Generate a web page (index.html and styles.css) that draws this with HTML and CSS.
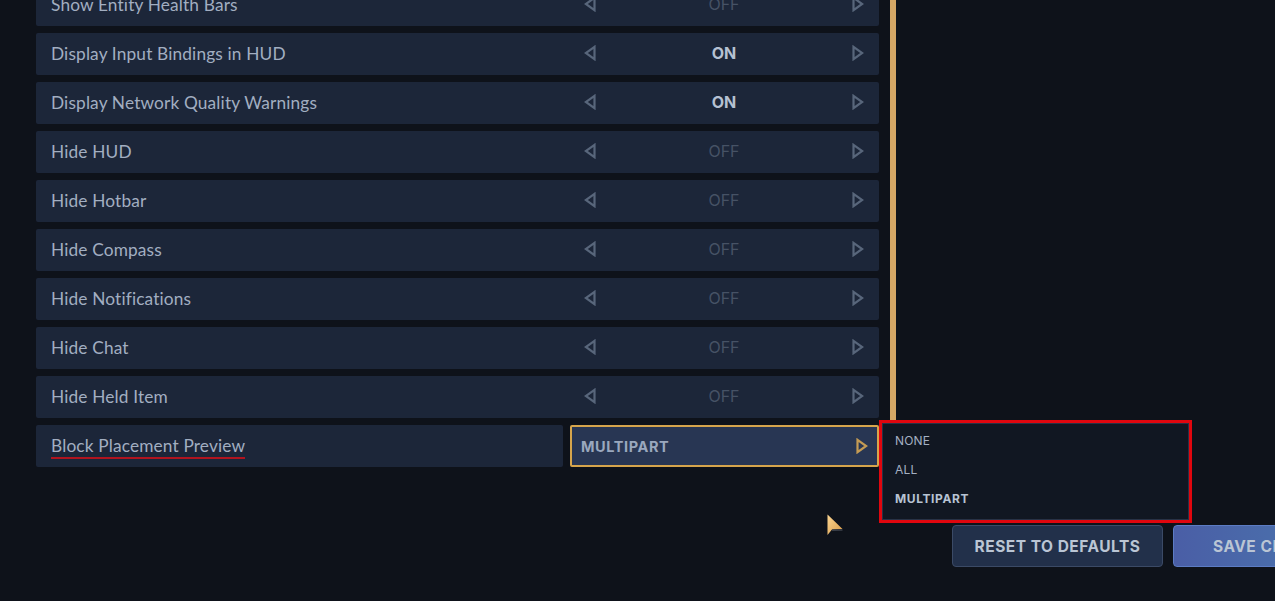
FILE: index.html
```html
<!DOCTYPE html>
<html>
<head>
<meta charset="utf-8">
<link rel="stylesheet" href="styles.css">
</head>
<body>
<div class="screen">
  <div class="content">
    <div class="list">
      <div class="row"><div class="label">Show Entity Health Bars</div><div class="ctrl"><svg class="arr" viewBox="0 0 12 16"><path d="M10.5 1.8 L1.8 8 L10.5 14.2 Z"/></svg><span class="val off">OFF</span><svg class="arr" viewBox="0 0 12 16"><path d="M1.5 1.8 L10.2 8 L1.5 14.2 Z"/></svg></div></div>
      <div class="row"><div class="label">Display Input Bindings in HUD</div><div class="ctrl"><svg class="arr" viewBox="0 0 12 16"><path d="M10.5 1.8 L1.8 8 L10.5 14.2 Z"/></svg><span class="val on">ON</span><svg class="arr" viewBox="0 0 12 16"><path d="M1.5 1.8 L10.2 8 L1.5 14.2 Z"/></svg></div></div>
      <div class="row"><div class="label">Display Network Quality Warnings</div><div class="ctrl"><svg class="arr" viewBox="0 0 12 16"><path d="M10.5 1.8 L1.8 8 L10.5 14.2 Z"/></svg><span class="val on">ON</span><svg class="arr" viewBox="0 0 12 16"><path d="M1.5 1.8 L10.2 8 L1.5 14.2 Z"/></svg></div></div>
      <div class="row"><div class="label">Hide HUD</div><div class="ctrl"><svg class="arr" viewBox="0 0 12 16"><path d="M10.5 1.8 L1.8 8 L10.5 14.2 Z"/></svg><span class="val off">OFF</span><svg class="arr" viewBox="0 0 12 16"><path d="M1.5 1.8 L10.2 8 L1.5 14.2 Z"/></svg></div></div>
      <div class="row"><div class="label">Hide Hotbar</div><div class="ctrl"><svg class="arr" viewBox="0 0 12 16"><path d="M10.5 1.8 L1.8 8 L10.5 14.2 Z"/></svg><span class="val off">OFF</span><svg class="arr" viewBox="0 0 12 16"><path d="M1.5 1.8 L10.2 8 L1.5 14.2 Z"/></svg></div></div>
      <div class="row"><div class="label">Hide Compass</div><div class="ctrl"><svg class="arr" viewBox="0 0 12 16"><path d="M10.5 1.8 L1.8 8 L10.5 14.2 Z"/></svg><span class="val off">OFF</span><svg class="arr" viewBox="0 0 12 16"><path d="M1.5 1.8 L10.2 8 L1.5 14.2 Z"/></svg></div></div>
      <div class="row"><div class="label">Hide Notifications</div><div class="ctrl"><svg class="arr" viewBox="0 0 12 16"><path d="M10.5 1.8 L1.8 8 L10.5 14.2 Z"/></svg><span class="val off">OFF</span><svg class="arr" viewBox="0 0 12 16"><path d="M1.5 1.8 L10.2 8 L1.5 14.2 Z"/></svg></div></div>
      <div class="row"><div class="label">Hide Chat</div><div class="ctrl"><svg class="arr" viewBox="0 0 12 16"><path d="M10.5 1.8 L1.8 8 L10.5 14.2 Z"/></svg><span class="val off">OFF</span><svg class="arr" viewBox="0 0 12 16"><path d="M1.5 1.8 L10.2 8 L1.5 14.2 Z"/></svg></div></div>
      <div class="row"><div class="label">Hide Held Item</div><div class="ctrl"><svg class="arr" viewBox="0 0 12 16"><path d="M10.5 1.8 L1.8 8 L10.5 14.2 Z"/></svg><span class="val off">OFF</span><svg class="arr" viewBox="0 0 12 16"><path d="M1.5 1.8 L10.2 8 L1.5 14.2 Z"/></svg></div></div>
      <div class="row split">
        <div class="label-box"><span class="label marked">Block Placement Preview</span></div>
        <div class="select">
          <span class="sel-val">MULTIPART</span>
          <svg class="arr gold" viewBox="0 0 12 16"><path d="M1.5 1.8 L10.2 8 L1.5 14.2 Z"/></svg>
          <div class="dropdown">
            <div class="dd-inner">
              <div class="opt">NONE</div>
              <div class="opt">ALL</div>
              <div class="opt sel">MULTIPART</div>
            </div>
          </div>
        </div>
      </div>
    </div>
    <div class="scroll"></div>
  </div>
  <div class="footer">
    <button class="btn reset">RESET TO DEFAULTS</button>
    <button class="btn save">SAVE CHANGES</button>
  </div>
  <svg class="cursor" viewBox="0 0 16 22"><defs><linearGradient id="cg" x1="0" y1="0" x2="1" y2="1"><stop offset="0" stop-color="#fcd693"/><stop offset="1" stop-color="#d89a46"/></linearGradient></defs><path d="M0.5 0.5 L0.5 21 L5 15.5 L15.5 15 Z" fill="url(#cg)"/><path d="M5 16.3 L15.5 16" stroke="#3a3f49" stroke-width="1.4"/></svg>
</div>
</body>
</html>
```

FILE: styles.css
```css
* { box-sizing: border-box; }
html, body { margin: 0; padding: 0; }
body {
  background: #0e121a;
  width: 1275px;
  height: 601px;
  overflow: hidden;
  font-family: "Lato", "Nunito Sans", "Open Sans", sans-serif;
}
.screen {
  position: relative;
  width: 1275px;
  height: 601px;
  overflow: hidden;
}
.content {
  display: flex;
  align-items: flex-start;
  gap: 11px;
  margin-top: -16px;
  padding-left: 36px;
}
.list {
  width: 843px;
  display: flex;
  flex-direction: column;
  gap: 7px;
}
.row {
  height: 42px;
  background: #1c2639;
  border-radius: 2px;
  display: flex;
  align-items: center;
}
.label {
  flex: 1;
  padding-left: 15px;
  padding-bottom: 2px;
  font-size: 17.3px;
  color: #a2aec1;
  letter-spacing: 0.15px;
}
.ctrl {
  width: 308px;
  display: flex;
  align-items: center;
  justify-content: space-between;
  padding: 0 15px 2px 13px;
}
.arr {
  width: 12px;
  height: 16px;
}
.arr path {
  fill: none;
  stroke: #58667b;
  stroke-width: 2.2;
  stroke-linejoin: miter;
}
.val {
  font-size: 16px;
  font-family: "Inter", "Lato", sans-serif;
}
.val.on { font-weight: 700; color: #b5c1d2; }
.val.off { font-weight: 400; color: #465265; }
.row.split {
  background: transparent;
  gap: 7px;
}
.label-box {
  width: 527px;
  height: 42px;
  background: #1c2639;
  border-radius: 2px;
  display: flex;
  align-items: center;
}
.label.marked {
  flex: none;
  margin-left: 15px;
  padding-left: 0;
  padding-top: 3px;
  padding-bottom: 1px;
  border-bottom: 2px solid #b0141f;
  line-height: 20px;
}
.select {
  position: relative;
  width: 309px;
  height: 42px;
  background: #283653;
  border: 2px solid #d6a54c;
  border-radius: 2px;
  display: flex;
  align-items: center;
  justify-content: space-between;
  padding: 0 9px 0 9px;
}
.sel-val {
  font-family: "Inter", "Lato", sans-serif;
  font-weight: 700;
  font-size: 14.5px;
  color: #9aa8be;
  letter-spacing: 0.6px;
}
.arr.gold path { stroke: #c49b54; }
.dropdown {
  position: absolute;
  left: calc(100% + 2px);
  top: -7px;
  width: 313px;
  height: 103px;
  border: 3px solid #e0060e;
  background: #0e121a;
  z-index: 5;
}
.dd-inner {
  height: 100%;
  border: 1px solid #283246;
  background: #111722;
  padding: 2px 0 0 12px;
  display: flex;
  flex-direction: column;
}
.opt {
  height: 29px;
  line-height: 29px;
  font-family: "Inter", "Lato", sans-serif;
  font-size: 12px;
  letter-spacing: 0.2px;
  color: #a4b0c2;
}
.opt.sel { font-weight: 700; color: #b7c3d3; letter-spacing: 0.6px; }
.scroll {
  width: 6px;
  height: 436px;
  background: #d4a765;
}
.footer {
  display: flex;
  gap: 10px;
  padding-left: 952px;
  margin-top: 58px;
}
.btn {
  flex: none;
  height: 42px;
  border-radius: 4px;
  font-family: "Inter", "Lato", sans-serif;
  font-weight: 700;
  font-size: 15.5px;
  letter-spacing: 0.5px;
  color: #bac5d4;
  padding: 0;
}
.btn.reset {
  width: 211px;
  background: #22304a;
  border: 1px solid #3b4a66;
}
.btn.save {
  width: 190px;
  background: linear-gradient(90deg, #4a5ea6, #4a78ae);
  border: 1px solid #5c7cc4;
  text-align: left;
  padding-left: 39px;
}
.cursor {
  position: absolute;
  left: 827px;
  top: 514px;
  width: 16px;
  height: 22px;
}
```
